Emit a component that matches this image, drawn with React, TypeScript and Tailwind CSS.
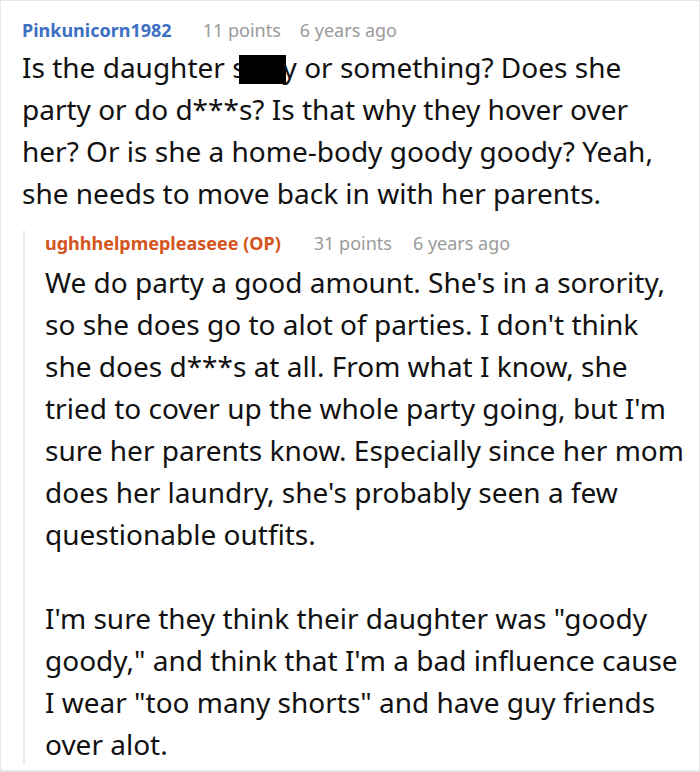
import React from "react";

const Line = ({ children }: { children: React.ReactNode }) => (
  <span className="block whitespace-nowrap">{children}</span>
);

export default function App() {
  return (
    <div className="w-[700px] h-[772px] bg-white border-t border-l border-r border-b-2 border-[#e6e6e6] overflow-hidden" style={{ fontFamily: '"Noto Sans", "Open Sans", sans-serif' }}>
      <div className="pl-[21px] pt-[16px]">
        <div className="flex items-baseline text-[18px] leading-[26px]">
          <span className="font-bold text-[#3d6fc3]">Pinkunicorn1982</span>
          <span className="ml-[31px] text-[#9a9a9a]">11 points</span>
          <span className="ml-[19px] text-[#9a9a9a]">6 years ago</span>
        </div>
        <p className="text-[28px] leading-[42px] text-[#111] mt-[3px]">
          <Line>
            Is the daughter s<span className="inline-block bg-black w-[47px] h-[29px] align-[-6px] -ml-[7px] -mr-[3px]"></span>y or something? Does she
          </Line>
          <Line>party or do d***s? Is that why they hover over</Line>
          <Line>her? Or is she a home-body goody goody? Yeah,</Line>
          <Line>she needs to move back in with her parents.</Line>
        </p>
        <div className="mt-[16px] ml-[1px] border-l-2 border-[#ececec] pl-[20px]">
          <div className="flex items-baseline text-[18px] leading-[26px]">
            <span className="font-bold text-[#d4541d]">ughhhelpmepleaseee (OP)</span>
            <span className="ml-[33px] text-[#9a9a9a]">31 points</span>
            <span className="ml-[21px] text-[#9a9a9a]">6 years ago</span>
          </div>
          <p className="text-[28px] leading-[42px] text-[#111] mt-[5px]">
            <Line>We do party a good amount. She's in a sorority,</Line>
            <Line>so she does go to alot of parties. I don't think</Line>
            <Line>she does d***s at all. From what I know, she</Line>
            <Line>tried to cover up the whole party going, but I'm</Line>
            <Line>sure her parents know. Especially since her mom</Line>
            <Line>does her laundry, she's probably seen a few</Line>
            <Line>questionable outfits.</Line>
          </p>
          <p className="text-[28px] leading-[42px] text-[#111] mt-[42px] -mb-[10px]">
            <Line>I'm sure they think their daughter was "goody</Line>
            <Line>goody," and think that I'm a bad influence cause</Line>
            <Line>I wear "too many shorts" and have guy friends</Line>
            <Line>over alot.</Line>
          </p>
        </div>
      </div>
    </div>
  );
}
